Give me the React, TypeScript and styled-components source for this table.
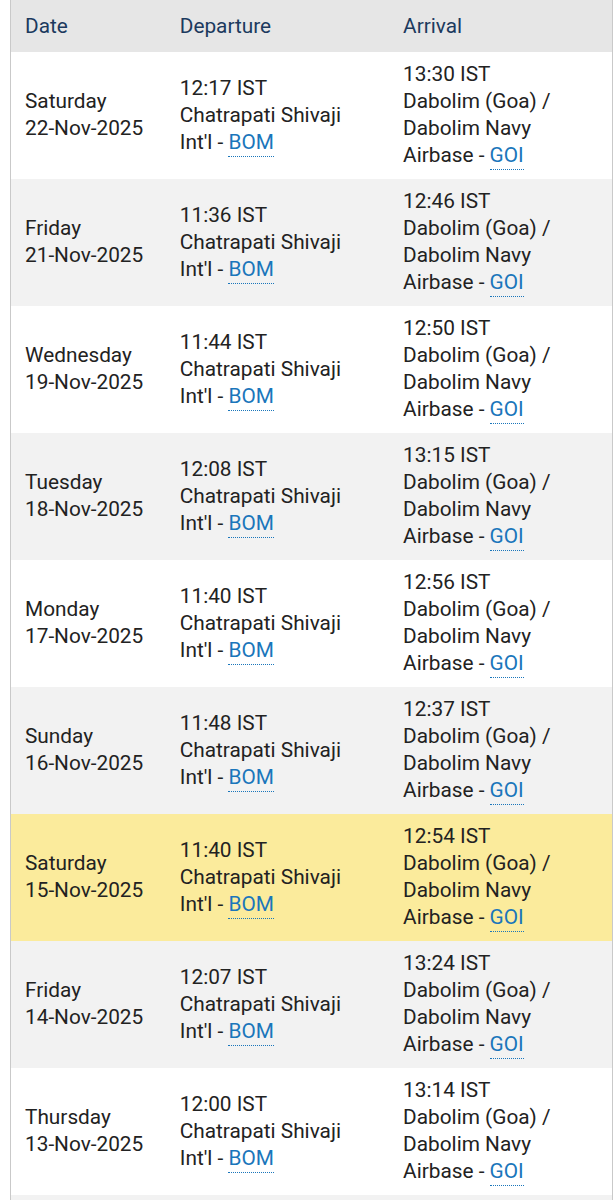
import styled, { createGlobalStyle } from 'styled-components';

const GlobalStyle = createGlobalStyle`
  body {
    margin: 0;
    background: #ffffff;
    font-family: Roboto, "Noto Sans", sans-serif;
  }
`

type Flight = {
  day: string
  date: string
  dep: string
  arr: string
  highlight?: boolean
}

const flights: Flight[] = [
  { day: 'Saturday', date: '22-Nov-2025', dep: '12:17', arr: '13:30' },
  { day: 'Friday', date: '21-Nov-2025', dep: '11:36', arr: '12:46' },
  { day: 'Wednesday', date: '19-Nov-2025', dep: '11:44', arr: '12:50' },
  { day: 'Tuesday', date: '18-Nov-2025', dep: '12:08', arr: '13:15' },
  { day: 'Monday', date: '17-Nov-2025', dep: '11:40', arr: '12:56' },
  { day: 'Sunday', date: '16-Nov-2025', dep: '11:48', arr: '12:37' },
  { day: 'Saturday', date: '15-Nov-2025', dep: '11:40', arr: '12:54', highlight: true },
  { day: 'Friday', date: '14-Nov-2025', dep: '12:07', arr: '13:24' },
  { day: 'Thursday', date: '13-Nov-2025', dep: '12:00', arr: '13:14' },
];

const rowBg = (i: number, highlight?: boolean) =>
  highlight ? '#fbeb9c' : i % 2 === 0 ? '#ffffff' : '#f2f2f2'

const Page = styled.div`
  padding-left: 10px;
  height: 1200px;
  overflow: hidden;
`

const Table = styled.table`
  width: 603px;
  border-collapse: collapse;
  border-left: 1px solid #c9c9c9;
  border-right: 1px solid #c9c9c9;
  table-layout: fixed;
  font-size: 20.8px;
  line-height: 27px;
  color: #222222;
`

const HeadCell = styled.th<{ $w: number }>`
  width: ${p => p.$w}px;
  height: 52px;
  padding: 0 14px;
  box-sizing: border-box;
  background: #e6e6e6;
  color: #1c3a5e;
  font-weight: 400;
  text-align: left;
  vertical-align: middle;
`

const Row = styled.tr<{ $bg: string; $h?: number }>`
  background: ${p => p.$bg};
  height: ${p => p.$h ?? 127}px;
`

const Cell = styled.td`
  padding: 9px 14px 10px;
  vertical-align: middle;
`

const FillerCell = styled.td`
  padding: 0;
`

const Line = styled.div``

const Code = styled.span`
  color: #1a76bb;
  border-bottom: 1px dotted #1a76bb;
  padding-bottom: 2px;
`

export default function App() {
  return (
    <Page>
      <GlobalStyle />
      <Table>
        <thead>
          <tr>
            <HeadCell $w={155}>Date</HeadCell>
            <HeadCell $w={223}>Departure</HeadCell>
            <HeadCell $w={223}>Arrival</HeadCell>
          </tr>
        </thead>
        <tbody>
          {flights.map((f, i) => (
            <Row key={f.date} $bg={rowBg(i, f.highlight)}>
              <Cell>
                <Line>{f.day}</Line>
                <Line>{f.date}</Line>
              </Cell>
              <Cell>
                <Line>{f.dep} IST</Line>
                <Line>Chatrapati Shivaji</Line>
                <Line>Int'l - <Code>BOM</Code></Line>
              </Cell>
              <Cell>
                <Line>{f.arr} IST</Line>
                <Line>Dabolim (Goa) /</Line>
                <Line>Dabolim Navy</Line>
                <Line>Airbase - <Code>GOI</Code></Line>
              </Cell>
            </Row>
          ))}
          <Row $bg={rowBg(flights.length)} $h={20}>
            <FillerCell colSpan={3} />
          </Row>
        </tbody>
      </Table>
    </Page>
  )
}
